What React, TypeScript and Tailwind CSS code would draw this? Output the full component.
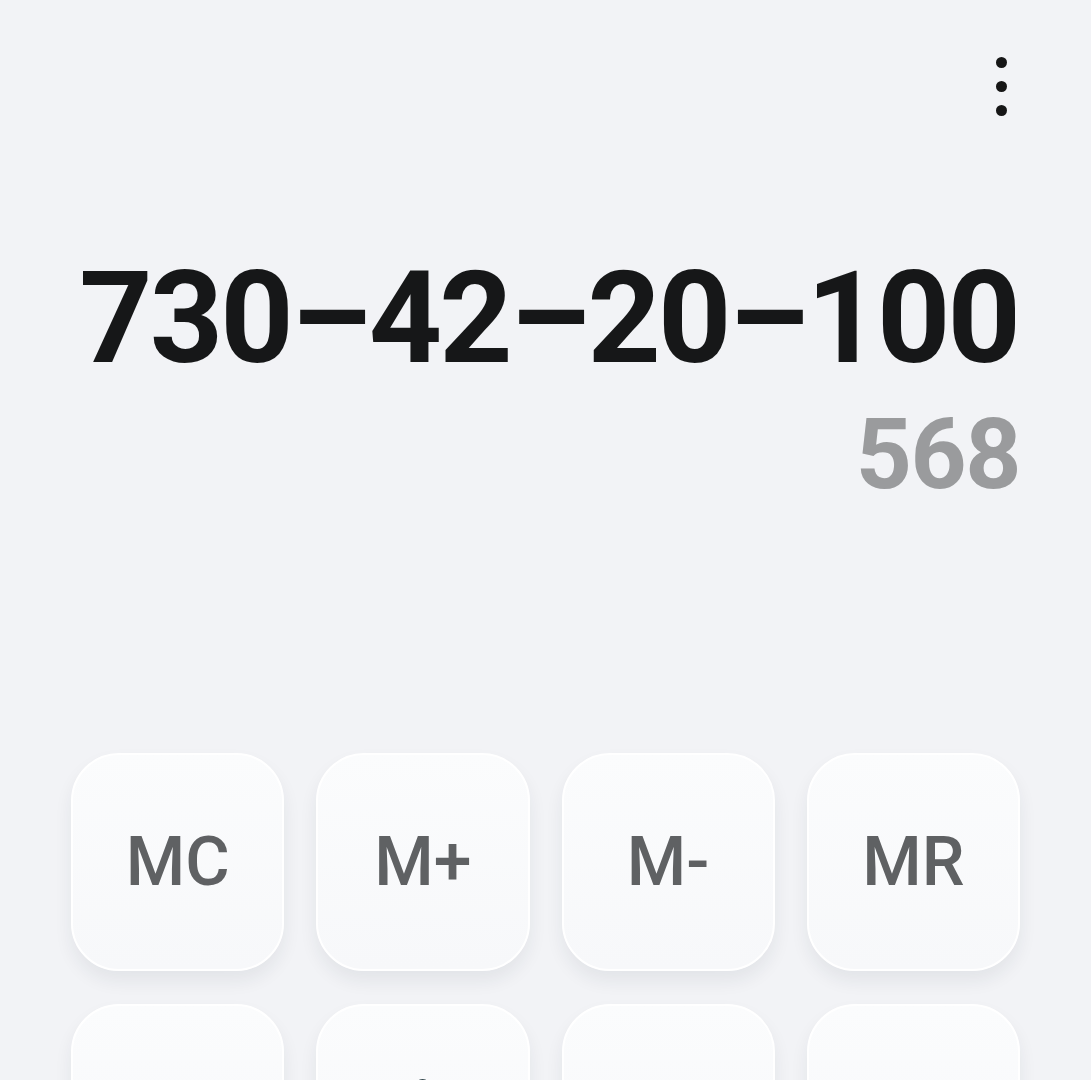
import { useState } from "react";

const memoryKeys = ["MC", "M+", "M-", "MR"];
const editKeys = ["C", "÷", "×", "⌫"];

function Key({ children }: { children?: React.ReactNode }) {
  return (
    <button className="flex h-[218px] items-center justify-center rounded-[48px] border-2 border-white bg-gradient-to-b from-[#fbfcfd] to-[#f7f8fa] text-[68px] font-medium text-[#5f6163] shadow-[0_10px_18px_rgba(30,40,60,0.07)]">
      {children}
    </button>
  );
}

export default function App() {
  const [expression] = useState("730–42–20–100");
  const [result] = useState("568");

  return (
    <div
      className="h-[1080px] w-full overflow-hidden bg-[#f2f3f6]"
      style={{ fontFamily: "Roboto, 'Noto Sans', 'DejaVu Sans', sans-serif" }}
    >
      <div className="flex justify-end pr-[84px] pt-[57px]">
        <div className="flex flex-col gap-[13px]">
          <span className="h-[11px] w-[11px] rounded-full bg-[#161616]" />
          <span className="h-[11px] w-[11px] rounded-full bg-[#161616]" />
          <span className="h-[11px] w-[11px] rounded-full bg-[#161616]" />
        </div>
      </div>

      <div className="mt-[138px] flex flex-col items-end pr-[73px]">
        <div className="text-[128px] font-bold leading-none tracking-[-2.9px] text-[#161718]">
          {expression}
        </div>
        <div className="mr-[-2px] mt-[24px] text-[98px] font-bold leading-none tracking-[-1.5px] text-[#9a9b9d]">
          {result}
        </div>
      </div>

      <div className="mt-[249px] grid grid-cols-4 gap-x-[32px] gap-y-[33px] px-[71px]">
        {memoryKeys.map((k) => (
          <Key key={k}>{k}</Key>
        ))}
        {editKeys.map((k) => (
          <Key key={k}>
            <span
              className={
                k === "÷"
                  ? "mb-[18px] text-[96px] leading-none text-[#34474d]"
                  : "text-[#34474d]"
              }
            >
              {k}
            </span>
          </Key>
        ))}
      </div>
    </div>
  );
}
